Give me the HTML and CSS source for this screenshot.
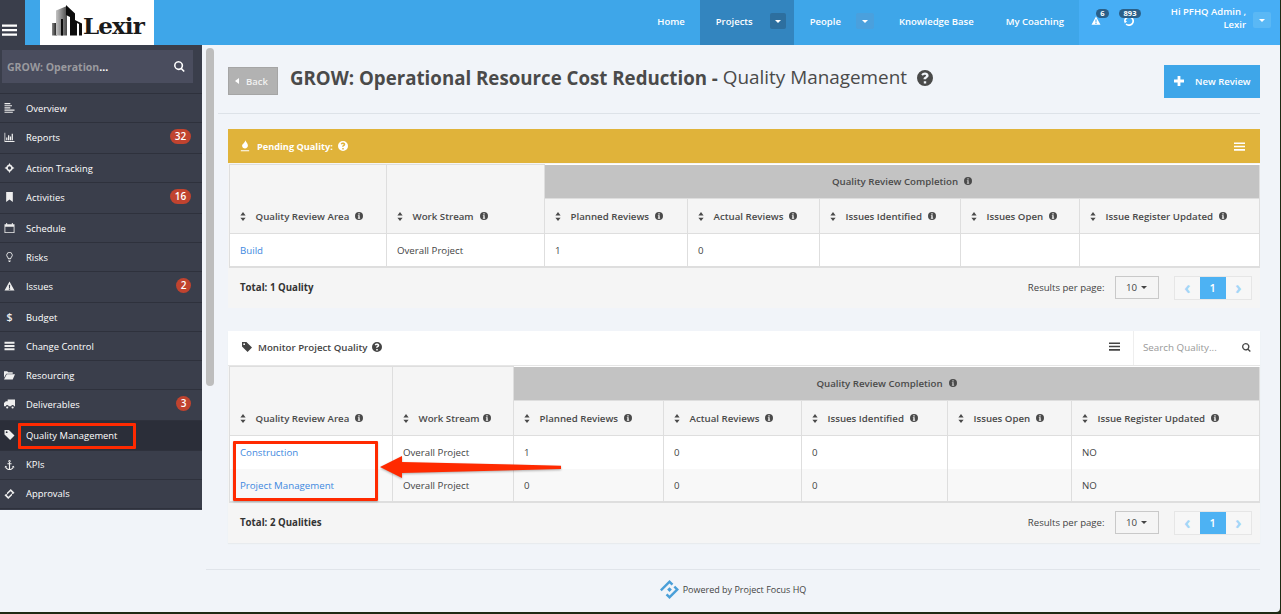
FILE: index.html
```html
<!DOCTYPE html>
<html lang="en">
<head>
<meta charset="utf-8">
<title>Quality Management</title>
<link rel="stylesheet" href="styles.css">
</head>
<body>
<svg class="sprite" aria-hidden="true">
  <symbol id="i-bars" viewBox="0 0 16 12"><path d="M0 0h16v2.400H0zM0 4.800h16v2.400H0zM0 9.600h16V12H0z"/></symbol>
  <symbol id="i-search" viewBox="0 0 14 14"><path d="M5.800 0a5.800 5.800 0 0 1 4.600 9.300l3.300 3.300-1.400 1.400-3.300-3.300A5.800 5.800 0 1 1 5.800 0zm0 2a3.800 3.800 0 1 0 0 7.600 3.800 3.800 0 0 0 0-7.600z"/></symbol>
  <symbol id="i-left" viewBox="0 0 12 12"><path d="M0 0h7v1.400H0zM0 2.600h9v1.400H0zM0 5.200h7v1.400H0zM0 7.800h12v1.400H0zM0 10.400h10v1.400H0z"/></symbol>
  <symbol id="i-chart" viewBox="0 0 12 12"><path d="M0 1h.9v9.900H12V12H0zM2 6.500h1.500V10H2zM4.200 4h1.500v6H4.200zM6.400 5.500h1.500V10H6.400zM8.600 2h1.500v8H8.600z"/></symbol>
  <symbol id="i-cross" viewBox="0 0 12 12"><path d="M6 0l1.200 2.200A4 4 0 0 1 9.800 4.800L12 6 9.800 7.200A4 4 0 0 1 7.200 9.800L6 12 4.800 9.800A4 4 0 0 1 2.200 7.200L0 6 2.200 4.800A4 4 0 0 1 4.800 2.200zM6 4a2 2 0 1 0 0 4 2 2 0 0 0 0-4z" fill-rule="evenodd"/></symbol>
  <symbol id="i-bookmark" viewBox="0 0 12 12"><path d="M2 0h8v12L6 9l-4 3z"/></symbol>
  <symbol id="i-cal" viewBox="0 0 12 12"><path d="M0 1.500h2V0h1.200v1.500h5.600V0H10v1.500h2V12H0zm1 3V11h10V4.500z" fill-rule="evenodd"/></symbol>
  <symbol id="i-bulb" viewBox="0 0 12 12"><path d="M6 0a3.800 3.800 0 0 1 2.300 6.800L7.800 8.500H4.200l-.5-1.700A3.800 3.800 0 0 1 6 0zm0 1a2.800 2.800 0 0 0-1.600 5.100l.5 1.400h2.200l.5-1.400A2.800 2.800 0 0 0 6 1zM4.500 9.200h3v1h-3zM5 10.800h2V12H5z" fill-rule="evenodd"/></symbol>
  <symbol id="i-warn" viewBox="0 0 12 12"><path d="M6 .5L12 11.500H0zM5.200 4.500l.2 3.800h1.200l.2-3.800zM5.200 9v1.500h1.600V9z" fill-rule="evenodd"/></symbol>
  <symbol id="i-tasks" viewBox="0 0 12 12"><path d="M0 1h12v2.200H0zM0 4.900h12v2.200H0zM0 8.800h12V11H0z"/></symbol>
  <symbol id="i-folder" viewBox="0 0 12 10"><path d="M0 1h3.500l1 1H9.500v1.500H2.500L0 8zM3 4.300h9L9.500 10H0z"/></symbol>
  <symbol id="i-truck" viewBox="0 0 12 10"><path d="M4 0h8v7.500h-1.100a1.500 1.500 0 0 0-3 0H5a1.500 1.500 0 0 0-3 0H0V4l2-2h2zM3.500 10a1.200 1.200 0 1 1 0-2.400 1.200 1.200 0 0 1 0 2.400zm5.900 0a1.200 1.200 0 1 1 0-2.400 1.200 1.200 0 0 1 0 2.400z"/></symbol>
  <symbol id="i-tag" viewBox="0 0 12 12"><path d="M0 0h5.300L12 6.700 6.700 12 0 5.300zM2.600 1.500a1.100 1.100 0 1 0 0 2.200 1.100 1.100 0 0 0 0-2.200z" fill-rule="evenodd"/></symbol>
  <symbol id="i-anchor" viewBox="0 0 12 12"><path d="M6 0a1.500 1.500 0 0 1 .7 2.800V4H8.500v1H6.700v5.800c1.500-.2 2.600-1 3.100-2L8.800 8 11 6.800 12 9l-.9-.4C10.400 10.600 8.400 12 6 12S1.600 10.600.9 8.600L0 9l1-2.200L3.200 8l-1 .8c.5 1 1.600 1.800 3.100 2V5H3.500V4h1.800V2.800A1.500 1.500 0 0 1 6 0zm0 1a.5.5 0 1 0 0 1 .5.5 0 0 0 0-1z" fill-rule="evenodd"/></symbol>
  <symbol id="i-ticket" viewBox="0 0 12 12"><path d="M7.500 0L12 4.500 10.800 5.700a1.300 1.300 0 0 0-1.700 1.700L4.500 12 0 7.500l1.200-1.200a1.300 1.300 0 0 0 1.700-1.700zM7.300 2.600L2.600 7.300l2.100 2.100 4.700-4.700z" fill-rule="evenodd"/></symbol>
  <symbol id="i-info" viewBox="0 0 12 12"><path d="M6 0a6 6 0 1 1 0 12A6 6 0 0 1 6 0zM5 1.800v2h2v-2zM4.300 5v1.100H5v2.700h-.7V10h3.400V8.800H7V5z" fill-rule="evenodd"/></symbol>
  <symbol id="i-help" viewBox="0 0 12 12"><path d="M6 0a6 6 0 1 1 0 12A6 6 0 0 1 6 0zM5.100 8.400v1.800h1.800V8.400zM6 1.900c-1.300 0-2.200.6-2.800 1.500l1.200.9c.4-.5.8-.8 1.400-.8.6 0 1 .3 1 .7 0 .5-.4.7-.9 1-.6.3-1 .8-1 1.500v.3h1.800c0-.4.2-.6.7-.9.7-.4 1.300-.9 1.300-1.900 0-1.500-1.400-2.300-2.700-2.300z" fill-rule="evenodd"/></symbol>
  <symbol id="i-sort" viewBox="0 0 8 12"><path d="M4 0l3.500 4.500H.5zM4 12L.5 7.500h7z"/></symbol>
  <symbol id="i-fire" viewBox="0 0 12 14"><path d="M6.500 0c.5 2.200 3 3.700 3 6.500 0 2-1.500 3.500-3.500 3.500S2.500 8.500 2.500 6.700C2.500 4.600 5.800 3.200 6.500 0zM1 12h10v1.200H1z"/></symbol>
  <symbol id="i-plus" viewBox="0 0 10 10"><path d="M3.600 0h2.800v3.600H10v2.800H6.400V10H3.600V6.400H0V3.600h3.600z"/></symbol>
  <symbol id="i-globe" viewBox="0 0 12 12"><path d="M6 0a6 6 0 1 1-4.200 10.300l1.400-1.400A4 4 0 1 0 2 6h1.800L1 9 0 6h0A6 6 0 0 1 6 0z"/></symbol>
</svg>

<div class="page">
  <header class="top">
    <button class="burger"><svg class="ic-burger"><use href="#i-bars"/></svg></button>
    <div class="logo">
      <svg class="logo-mark" viewBox="0 0 30 31">
        <defs>
          <linearGradient id="bld" x1="0" x2="1" y1="0" y2="0"><stop offset="0" stop-color="#c4c4c4"/><stop offset="1" stop-color="#4a4a4a"/></linearGradient>
          <linearGradient id="bls" x1="0" x2="1" y1="0" y2="0"><stop offset="0" stop-color="#8a8a8a"/><stop offset="1" stop-color="#111"/></linearGradient>
        </defs>
        <path fill="url(#bls)" d="M0 18h5v12.500H0z"/>
        <path fill="url(#bld)" d="M4 5.500L15 1v29.500H4z"/>
        <path fill="#0c0c0c" d="M14 0l9 8.500v22h-5V12l-4-2zM9 30.500V14h2v16.500zM23 15l7 3.500v12h-3V19l-2-1v12.500h-2z"/>
      </svg>
      <span class="logo-text">Lexir</span>
    </div>
    <nav class="nav">
      <a class="nav-item">Home</a>
      <a class="nav-item has-caret is-active">Projects<span class="caret-box dark"><i class="caret"></i></span></a>
      <a class="nav-item has-caret people">People<span class="caret-box wide"><i class="caret"></i></span></a>
      <a class="nav-item">Knowledge Base</a>
      <a class="nav-item coach">My Coaching</a>
    </nav>
    <div class="userbar">
      <span class="alert"><svg class="ic-alert"><use href="#i-warn"/></svg><b class="pill pill-a">6</b></span>
      <span class="alert alert-g"><svg class="ic-alert"><use href="#i-globe"/></svg><b class="pill pill-b">893</b></span>
      <span class="user">Hi PFHQ Admin ,<br>Lexir</span>
      <span class="caret-box user-caret"><i class="caret"></i></span>
    </div>
  </header>

  <div class="layout">
    <aside class="sidebar">
      <div class="search-wrap"><div class="side-search"><span class="side-search-t">GROW: Operation<em>...</em></span><svg class="ic-s"><use href="#i-search"/></svg></div></div>
      <ul class="menu">
        <li><svg class="mi"><use href="#i-left"/></svg>Overview</li>
        <li class="tall"><svg class="mi"><use href="#i-chart"/></svg>Reports<span class="badge">32</span></li>
        <li><svg class="mi"><use href="#i-cross"/></svg>Action Tracking</li>
        <li class="tall"><svg class="mi"><use href="#i-bookmark"/></svg>Activities<span class="badge">16</span></li>
        <li><svg class="mi"><use href="#i-cal"/></svg>Schedule</li>
        <li><svg class="mi"><use href="#i-bulb"/></svg>Risks</li>
        <li class="tall"><svg class="mi"><use href="#i-warn"/></svg>Issues<span class="badge sm">2</span></li>
        <li><span class="mi mi-t">$</span>Budget</li>
        <li><svg class="mi"><use href="#i-tasks"/></svg>Change Control</li>
        <li><svg class="mi"><use href="#i-folder"/></svg>Resourcing</li>
        <li class="tall"><svg class="mi"><use href="#i-truck"/></svg>Deliverables<span class="badge sm">3</span></li>
        <li class="active"><svg class="mi"><use href="#i-tag"/></svg>Quality Management</li>
        <li><svg class="mi"><use href="#i-anchor"/></svg>KPIs</li>
        <li><svg class="mi"><use href="#i-ticket"/></svg>Approvals</li>
      </ul>
    </aside>

    <main class="main">
      <div class="thumb"></div>
      <div class="head">
        <a class="back"><i class="tri-l"></i>Back</a>
        <h1 class="title"><b>GROW: Operational Resource Cost Reduction - </b><span class="sub">Quality Management</span><svg class="ic-title"><use href="#i-help"/></svg></h1>
        <a class="new"><svg class="ic-plus"><use href="#i-plus"/></svg>New Review</a>
      </div>

      <section class="panel panel-a">
        <div class="panel-h gold">
          <svg class="ic-fire"><use href="#i-fire"/></svg><b class="pend">Pending Quality:</b><svg class="ic-qw"><use href="#i-help"/></svg>
          <svg class="ic-menu"><use href="#i-bars"/></svg>
        </div>
        <table class="grid grid-a">
          <colgroup><col class="a1"><col class="a2"><col class="a3"><col class="a4"><col class="a5"><col class="a6"><col class="a7"></colgroup>
          <thead>
            <tr class="r-group"><th rowspan="2" class="th-b"><svg class="srt"><use href="#i-sort"/></svg>Quality Review Area<svg class="inf"><use href="#i-info"/></svg></th><th rowspan="2" class="th-b"><svg class="srt"><use href="#i-sort"/></svg>Work Stream<svg class="inf"><use href="#i-info"/></svg></th><th colspan="5" class="grp">Quality Review Completion<svg class="inf"><use href="#i-info"/></svg></th></tr>
            <tr class="r-head"><th><svg class="srt"><use href="#i-sort"/></svg>Planned Reviews<svg class="inf"><use href="#i-info"/></svg></th><th><svg class="srt"><use href="#i-sort"/></svg>Actual Reviews<svg class="inf"><use href="#i-info"/></svg></th><th><svg class="srt"><use href="#i-sort"/></svg>Issues Identified<svg class="inf"><use href="#i-info"/></svg></th><th><svg class="srt"><use href="#i-sort"/></svg>Issues Open<svg class="inf"><use href="#i-info"/></svg></th><th><svg class="srt"><use href="#i-sort"/></svg>Issue Register Updated<svg class="inf"><use href="#i-info"/></svg></th></tr>
          </thead>
          <tbody>
            <tr class="r-data last"><td><a class="lnk">Build</a></td><td>Overall Project</td><td>1</td><td>0</td><td></td><td></td><td></td></tr>
          </tbody>
        </table>
        <div class="panel-f">
          <b class="total">Total: 1 Quality</b>
          <span class="rpp">Results per page:</span>
          <span class="sel">10<i class="caret dk"></i></span>
          <span class="pager"><span class="pg">&#8249;</span><span class="pg on">1</span><span class="pg">&#8250;</span></span>
        </div>
      </section>

      <section class="panel panel-b">
        <div class="panel-h white">
          <svg class="ic-tag"><use href="#i-tag"/></svg><b class="mon">Monitor Project Quality</b><svg class="ic-qd"><use href="#i-help"/></svg>
          <svg class="ic-menu2"><use href="#i-bars"/></svg>
          <div class="tsearch"><span>Search Quality...</span><svg class="ic-ts"><use href="#i-search"/></svg></div>
        </div>
        <table class="grid grid-b">
          <colgroup><col class="b1"><col class="b2"><col class="b3"><col class="b4"><col class="b5"><col class="b6"><col class="b7"></colgroup>
          <thead>
            <tr class="r-group"><th rowspan="2" class="th-b"><svg class="srt"><use href="#i-sort"/></svg>Quality Review Area<svg class="inf"><use href="#i-info"/></svg></th><th rowspan="2" class="th-b"><svg class="srt"><use href="#i-sort"/></svg>Work Stream<svg class="inf tight"><use href="#i-info"/></svg></th><th colspan="5" class="grp">Quality Review Completion<svg class="inf"><use href="#i-info"/></svg></th></tr>
            <tr class="r-head"><th><svg class="srt"><use href="#i-sort"/></svg>Planned Reviews<svg class="inf"><use href="#i-info"/></svg></th><th><svg class="srt"><use href="#i-sort"/></svg>Actual Reviews<svg class="inf"><use href="#i-info"/></svg></th><th><svg class="srt"><use href="#i-sort"/></svg>Issues Identified<svg class="inf"><use href="#i-info"/></svg></th><th><svg class="srt"><use href="#i-sort"/></svg>Issues Open<svg class="inf"><use href="#i-info"/></svg></th><th><svg class="srt"><use href="#i-sort"/></svg>Issue Register Updated<svg class="inf"><use href="#i-info"/></svg></th></tr>
          </thead>
          <tbody>
            <tr class="r-data"><td><a class="lnk">Construction</a></td><td>Overall Project</td><td>1</td><td>0</td><td>0</td><td></td><td>NO</td></tr>
            <tr class="r-data alt last"><td><a class="lnk">Project Management</a></td><td>Overall Project</td><td>0</td><td>0</td><td>0</td><td></td><td>NO</td></tr>
          </tbody>
        </table>
        <div class="panel-f">
          <b class="total">Total: 2 Qualities</b>
          <span class="rpp">Results per page:</span>
          <span class="sel">10<i class="caret dk"></i></span>
          <span class="pager"><span class="pg">&#8249;</span><span class="pg on">1</span><span class="pg">&#8250;</span></span>
        </div>
      </section>

      <footer class="foot">
        <svg class="foot-logo" viewBox="0 0 20 20"><path fill="#4a9fd8" d="M10 0l4 4-1.800 1.800L10 3.600 3.600 10 1.800 11.800 0 10zM16 6l4 4-10 10-4-4 1.800-1.800L10 16.400 16.400 10l-2.200-2.200zM10 7.500L12.500 10 10 12.500 7.500 10z"/></svg>
        <span>Powered by Project Focus HQ</span>
      </footer>
    </main>
  </div>

  <div class="mark mark-menu"></div>
  <div class="mark mark-links"></div>
  <svg class="mark-arrow" viewBox="0 0 184 26"><path fill="#ff2a00" d="M1 14L23 3V9L182 12.700V16L23 20V25z"/></svg>
</div>
</body>
</html>
```

FILE: styles.css
```css
* { box-sizing: border-box; }
html, body { margin: 0; height: 100%; }
body { background: #1f2a14; font-family: "Open Sans", "Liberation Sans", sans-serif; font-size: 9.7px; color: #444; overflow: hidden; }
.sprite { position: absolute; width: 0; height: 0; }
svg { fill: currentColor; flex: none; }
.page { position: relative; width: 1280px; height: 612px; background: #f1f4f9; overflow: hidden; border-bottom-right-radius: 4px; }

/* header */
.top { display: flex; height: 45px; background: #3ea6e9; color: #fff; }
.burger { width: 25px; background: #3a3e4b; border: 0; padding: 15px 0 0 2px; color: #fff; display: block; }
.ic-burger { display: block; width: 15px; height: 12px; }
.logo { width: 114px; margin-left: 15px; background: #fff; display: flex; align-items: flex-start; padding: 5px 0 0 12px; }
.logo-mark { width: 30px; height: 31px; }
.logo-text { font-family: "DejaVu Serif", serif; font-weight: 700; font-size: 23px; line-height: 26px; letter-spacing: -.9px; color: #1a1a1a; margin: 8px 0 0 1px; }
.nav { display: flex; margin-left: auto; font-size: 9.5px; font-weight: 600; }
.nav-item { display: flex; align-items: center; padding: 0 15px 3px 16px; }
.nav-item.has-caret { padding-right: 8px; }
.nav-item.people { padding-right: 9px; }
.nav-item.coach { padding-left: 17px; }
.nav-item.is-active { background: #3385bf; }
.caret-box { width: 16px; height: 16px; margin-left: 17px; border-radius: 2px; background: #2d6f9f; display: flex; align-items: center; justify-content: center; }
.caret-box.wide { width: 18px; margin-left: 15px; background: #4aa0dd; }
.caret { width: 0; height: 0; border-left: 3px solid transparent; border-right: 3px solid transparent; border-top: 3px solid #fff; }
.caret.dk { border-top-color: #444; margin-left: 4px; }
.userbar { width: 201px; background: #47aef5; display: flex; align-items: flex-start; }
.alert { position: relative; margin: 16px 0 0 12px; width: 12px; }
.alert-g { margin-left: 21px; }
.ic-alert { display: block; width: 10px; height: 9px; }
.alert-g .ic-alert { height: 10px; width: 10px; }
.pill { position: absolute; top: -7px; left: 5px; height: 9px; width: 13px; border-radius: 5px; background: #2a5f88; color: #fff; font-size: 7.5px; font-weight: 700; line-height: 9px; text-align: center; }
.pill-b { left: -5px; width: 22px; }
.user { width: 86px; margin: 5px 7px 0 24px; text-align: right; font-weight: 600; font-size: 9.5px; line-height: 13px; white-space: nowrap; }
.user-caret { width: 18px; margin: 12px 0 0; background: #5ab8f5; }

/* layout */
.layout { display: flex; height: 567px; }
.sidebar { width: 202px; height: 465px; background: #3a3e4b; color: #fff; flex: none; }
.search-wrap { height: 48px; padding: 5px 9px 0 2px; }
.side-search { height: 33px; background: #4a4d5e; display: flex; align-items: center; padding: 0 8px 0 5px; font-size: 10.5px; font-weight: 700; color: #9a9a9f; justify-content: space-between; }
.side-search-t em { font-style: normal; color: #fff; }
.ic-s { width: 11px; height: 11px; color: #fff; }
.menu { list-style: none; margin: 0; padding: 0; border-top: 1px solid #2e313c; }
.menu li { display: flex; align-items: center; height: 29px; padding-left: 4px; border-bottom: 1px solid #2e313c; font-size: 9.4px; position: relative; }
.menu li.tall { height: 31px; padding-bottom: 2px; }
.menu li.active { background: #2b2e39; height: 30px; padding-bottom: 1px; }
.menu .active ~ li { padding-bottom: 1px; }
.mi { width: 11px; height: 10px; margin-right: 11px; color: #eee; text-align: center; line-height: 10px; font-size: 10.5px; font-weight: 600; }
.mi-t { display: block; }
.badge { position: absolute; right: 11px; top: 6px; height: 15px; width: 21px; border-radius: 8px; background: #c0432f; text-align: center; line-height: 15px; font-size: 10px; font-weight: 600; }
.badge.sm { width: 15px; }

/* main */
.main { flex: 1; position: relative; padding-left: 26px; padding-right: 20px; min-width: 0; }
.thumb { position: absolute; left: 4px; top: 3px; width: 8px; height: 338px; background: #bdbdbd; border-radius: 4px; }
.head { display: flex; align-items: flex-start; height: 69px; margin-left: -10px; padding: 20px 0 0 10px; border-bottom: 1px solid #dde2e8; }
.back { width: 50px; height: 28px; margin-top: 2px; background: #b2b2b2; border: 1px solid #a5a5a5; color: #f1f1f1; font-weight: 600; font-size: 9.5px; display: flex; align-items: center; padding-left: 6px; }
.tri-l { width: 0; height: 0; margin-right: 7px; border-top: 3px solid transparent; border-bottom: 3px solid transparent; border-right: 4px solid #fff; }
.title { margin: -1px 0 0 12px; font-size: 18.7px; font-weight: 400; color: #4a4a4a; line-height: 27px; white-space: nowrap; display: flex; align-items: center; }
.title b { font-weight: 700; white-space: pre; }
.sub { font-size: 18.9px; }
.ic-title { width: 16px; height: 16px; margin-left: 10px; }
.new { margin-left: auto; width: 96px; height: 33px; background: #3ea6e9; color: #fff; font-size: 9.5px; font-weight: 600; display: flex; align-items: center; padding: 0 0 1px 10px; }
.ic-plus { width: 10px; height: 10px; margin-right: 11px; }

.panel { width: 1032px; background: #f5f5f5; }
.panel-a { margin-top: 15px; height: 179px; }
.panel-b { margin-top: 23px; height: 212px; box-shadow: 0 1px 1px #e8ebee; }
.panel-h { height: 35px; display: flex; align-items: center; position: relative; }
.gold { height: 34px; background: #e0b33a; color: #fff; padding-left: 12px; margin-bottom: 1px; }
.white { background: #fff; padding: 0 0 1px 14px; border-bottom: 1px solid #e6e6e6; }
.pend { font-size: 9.2px; font-weight: 700; }
.ic-fire { width: 10px; height: 12px; margin-right: 7px; }
.ic-qw { width: 10px; height: 10px; margin-left: 5px; }
.ic-menu { width: 11px; height: 9px; margin-left: auto; margin-right: 15px; }
.ic-tag { width: 10px; height: 10px; color: #444; margin: -2px 6px 0 0; }
.mon { font-weight: 600; color: #444; font-size: 9.7px; }
.ic-qd { width: 10px; height: 10px; margin-left: 5px; color: #444; margin-top: -2px; }
.ic-menu2 { width: 11px; height: 9px; margin-left: auto; margin-right: 13px; color: #444; margin-top: -3px; }
.tsearch { width: 127px; height: 34px; border-left: 1px solid #eee; display: flex; align-items: center; justify-content: space-between; padding: 0 9px; color: #999; font-size: 9.8px; }
.ic-ts { width: 9px; height: 9px; color: #444; }

.grid { table-layout: fixed; border-collapse: collapse; margin-left: 1px; width: 1030px; background: #fff; }
.a1 { width: 157px; } .a2 { width: 158px; } .a3 { width: 143px; } .a4 { width: 132px; } .a5 { width: 141px; } .a6 { width: 119px; } .a7 { width: 180px; }
.b1 { width: 163px; } .b2 { width: 121px; } .b3 { width: 150px; } .b4 { width: 138px; } .b5 { width: 146px; } .b6 { width: 124px; } .b7 { width: 188px; }
.grid th { background: #f5f5f5; border: 1px solid #dedede; font-weight: 600; font-size: 9.7px; text-align: left; padding: 0 0 0 10px; white-space: nowrap; color: #4a4a4a; }
.grid th.th-b { vertical-align: bottom; padding-bottom: 10px; }
.grid th.grp { background: #c3c3c3; text-align: center; border-top: 0; padding: 0; }
.r-group { height: 34px; }
.r-head { height: 35px; }
.r-data { height: 33px; }
.grid td { border: 1px solid #dedede; padding: 0 0 0 10px; font-size: 9.7px; color: #444; vertical-align: middle; }
.grid-a td { padding-top: 1px; }
.grid .r-data.alt td { background: #f8f8f8; border-top: 0; padding-top: 1px; }
.grid .r-data.last td { border-bottom-width: 2px; }
.grid-b .r-data:first-child td { border-bottom: 0; }
.srt { width: 6px; height: 9px; margin-right: 9.5px; vertical-align: -1px; }
.inf { width: 8px; height: 8px; margin-left: 6px; vertical-align: 0; }
.inf.tight { margin-left: 3px; }
.lnk { color: #4088e0; }

.panel-f { height: 40px; display: flex; align-items: center; padding: 0 8px 0 12px; }
.total { font-weight: 700; color: #333; margin-right: auto; font-size: 9.7px; }
.rpp { color: #444; font-size: 9.6px; }
.sel { width: 44px; height: 23px; margin-left: 10px; border: 1px solid #c9c9c9; display: flex; align-items: center; justify-content: center; color: #444; background: #f5f5f5; }
.pager { display: flex; margin-left: 15px; height: 24px; border: 1px solid #e6e6e6; }
.pg { width: 25.5px; display: flex; align-items: center; justify-content: center; color: #a4d6f7; font-size: 18px; font-weight: 700; line-height: 1; padding-bottom: 2px; background: #f7f7f7; }
.pg.on { background: #4db2f3; color: #fff; font-size: 11px; font-weight: 600; padding: 0; }

.foot { margin: 26px 0 0 -22px; border-top: 1px solid #e0e4ea; height: 41px; padding-bottom: 2px; display: flex; align-items: center; justify-content: center; gap: 4px; font-size: 9px; color: #444; }
.foot-logo { width: 19px; height: 19px; }

/* annotations */
.mark { position: absolute; border: 3px solid #ff2a00; border-radius: 1px; }
.mark-menu { left: 18px; top: 423px; width: 118px; height: 26px; }
.mark-links { left: 233px; top: 441px; width: 145px; height: 60px; box-shadow: 0 1px 2px rgba(0,0,0,.25); }
.mark-arrow { position: absolute; left: 379px; top: 453px; width: 184px; height: 26px; filter: drop-shadow(0 1px 1px rgba(0,0,0,.3)); }
```
